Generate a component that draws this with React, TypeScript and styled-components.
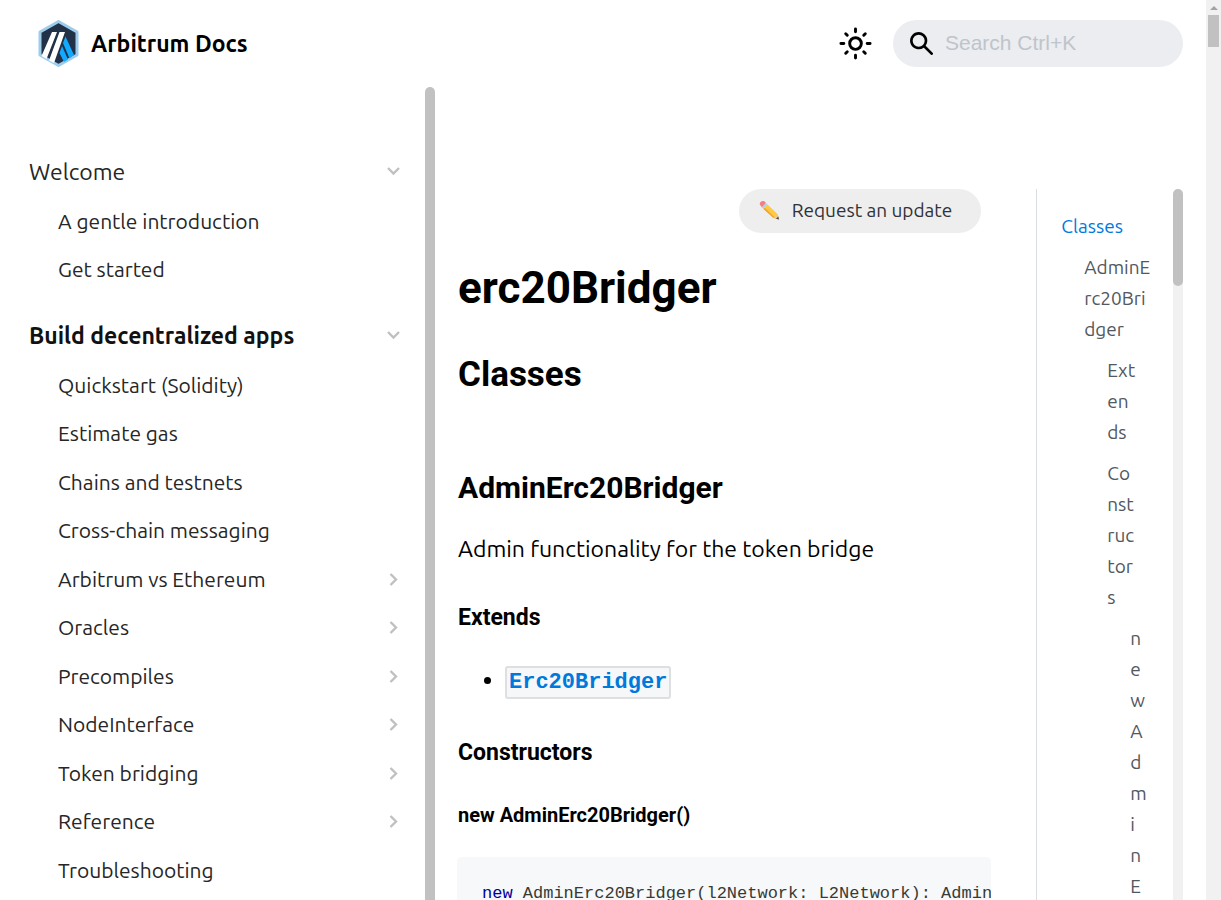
import React from 'react';
import styled, { createGlobalStyle, css } from 'styled-components';

const ui = 'Ubuntu, "Noto Sans", sans-serif';
const heading = 'Roboto, sans-serif';
const mono = '"Liberation Mono", monospace';

const Global = createGlobalStyle`
  *, *::before, *::after { box-sizing: border-box; }
  body { margin: 0; background: #fff; color: #000; font: 23px/36px ${ui}; overflow: hidden; }
  a { color: inherit; text-decoration: none; }
  ul { list-style: none; margin: 0; padding: 0; }
  code { font: inherit; }
  button { border: 0; background: none; padding: 0; color: inherit; cursor: pointer; font: inherit; }
`;

const Viewport = styled.div`
  display: flex;
  height: 100vh;
  overflow: hidden;
`;

const Page = styled.div`
  flex: 1;
  min-width: 0;
  display: flex;
  flex-direction: column;
`;

const PageScrollbar = styled.div`
  flex: none;
  width: 15px;
  padding: 6px 2px 0;
  background: #f1f1f1;
  display: flex;
  flex-direction: column;
  align-items: center;
  gap: 5px;
`;

const ScrollArrow = styled.span`
  border: 4px solid transparent;
  border-top: 0;
  border-bottom-color: #a3a3a3;
`;

const ScrollThumb = styled.span`
  width: 100%;
  height: 32px;
  background: #c1c1c1;
`;

const Navbar = styled.header`
  flex: none;
  display: flex;
  align-items: center;
  height: 87px;
  padding: 0 23px 0 38px;
`;

const Brand = styled.a`
  display: flex;
  align-items: center;
  gap: 12px;
  margin-right: auto;
  font-weight: 700;
`;

const ThemeButton = styled.button`
  display: grid;
  place-items: center;
  width: 46px;
  height: 46px;
  margin-right: 15px;
`;

const SearchBox = styled.label`
  display: flex;
  align-items: center;
  gap: 12px;
  width: 290px;
  height: 47px;
  padding: 0 17px;
  border-radius: 24px;
  background: #ebedf0;
`;

const SearchInput = styled.input`
  flex: 1;
  min-width: 0;
  padding: 0 0 2px;
  border: 0;
  outline: 0;
  background: none;
  font: 21px "Liberation Sans", sans-serif;
  &::placeholder { color: #bfc4cb; opacity: 1; }
`;

const Body = styled.div`
  flex: 1;
  min-height: 0;
  display: flex;
`;

const Sidebar = styled.aside`
  flex: none;
  display: flex;
  width: 435px;
  overflow: hidden;
`;

const Menu = styled.nav`
  flex: 1;
  padding: 61px 11px 0;
`;

const SidebarThumb = styled.span`
  width: 10px;
  border-radius: 5px 5px 0 0;
  background: #c1c1c1;
`;

const Group = styled.li`
  & + & { margin-top: 21px; }
`;

const rowBase = css`
  display: flex;
  align-items: center;
  justify-content: space-between;
  width: 100%;
  padding: 0 12px 0 18px;
  text-align: left;
`;

const GroupButton = styled.button<{ $active?: boolean }>`
  ${rowBase}
  height: 47px;
  font-weight: ${(p) => (p.$active ? 700 : 400)};
  color: ${(p) => (p.$active ? '#111' : '#262626')};
`;

const SubList = styled.ul`
  padding-left: 29px;
`;

const MenuItem = styled.li`
  display: flex;
  height: 44px;
  margin-top: 4px;
  &:nth-child(2n + 3) { margin-top: 5px; }
`;

const MenuLink = styled.a`
  ${rowBase}
  font-size: 21px;
  color: #262626;
`;

const Columns = styled.main`
  flex: 1;
  min-width: 0;
  display: grid;
  grid-template-columns: minmax(0, 3fr) minmax(0, 1fr);
  padding-top: 102px;
`;

const Article = styled.article`
  padding: 0 22px 0 23px;
  display: flex;
  flex-direction: column;
  min-width: 0;
`;

const UpdateLink = styled.a`
  align-self: flex-end;
  display: flex;
  align-items: center;
  gap: 12px;
  height: 44px;
  margin-right: 10px;
  padding: 0 29px 2px 20px;
  border-radius: 22px;
  background: #eee;
  color: #303236;
  font-size: 19px;
`;

const Title = styled.h1`
  margin: 28px 0 0;
  font: 700 44px/54px ${heading};
`;

const Section = styled.h2`
  margin: 38px 0 0;
  font: 700 35px/44px ${heading};
`;

const ClassName = styled.h3`
  margin: 72px 0 0;
  font: 700 30px/38px ${heading};
`;

const Text = styled.p`
  margin: 24px 0 0;
`;

const Subhead = styled.h4`
  margin: 37px 0 0;
  font: 700 23px/28px ${heading};
`;

const Signature = styled.h5`
  margin: 35px 0 0;
  font: 700 20px/26px ${heading};
`;

const Bullets = styled.ul`
  margin: 30px 0 4px;
  padding-left: 47px;
  list-style: disc;
`;

const CodeLink = styled.a`
  padding: 2px;
  border: 2px solid #dddfe0;
  border-radius: 3px;
  background: #f6f7f8;
  color: #0079dc;
  font: 700 22px ${mono};
`;

const CodeBlock = styled.pre`
  margin: 29px 0 0 -1px;
  padding: 24px 0 30px 25px;
  border-radius: 5px;
  background: #f6f8fa;
  overflow: hidden;
  color: #393a34;
  font: 17px/26px ${mono};
`;

const Keyword = styled.span`
  color: #00009f;
`;

const TocColumn = styled.aside`
  display: flex;
  margin: 0 23px;
  border-left: 1px solid #dadde1;
  overflow: hidden;
`;

const TocNav = styled.nav`
  flex: 1;
  min-width: 0;
  padding: 22px 8px 0 24px;
  color: #525860;
  font-size: 19px;
  line-height: 31px;
  overflow-wrap: anywhere;
`;

const TocList = styled.ul<{ $nested?: boolean }>`
  padding: ${(p) => (p.$nested ? '0 13px 0 23px' : '0')};
`;

const TocItem = styled.li`
  ${TocList} & { margin-top: 10px; }
  ${TocNav} > ul > & { margin-top: 0; }
`;

const TocLink = styled.a<{ $active?: boolean }>`
  display: block;
  color: ${(p) => (p.$active ? '#0079dc' : 'inherit')};
`;

const TocTrack = styled.div`
  width: 10px;
  background: #f1f1f1;
  border-radius: 5px 5px 0 0;
`;

const TocThumb = styled.span`
  display: block;
  height: 97px;
  border-radius: 5px;
  background: #c1c1c1;
`;

const Logo = () => (
  <svg width="41" height="47" viewBox="0 0 41 47" aria-hidden="true">
    <path d="M20.5 1.5 39 12v23L20.5 45.5 2 35V12z" fill="#213147" stroke="#9dcced" strokeWidth="3" strokeLinejoin="round" />
    <path d="M27.5 16.5 36 35 31.5 38.5 25 23z" fill="#12aaff" />
    <path d="M24 26 30 39.5 26 42 21.5 33z" fill="#12aaff" />
    <path d="M14 12h5L8.5 39l-5-3zM21.5 12h5.5L16 43l-5-2.5z" fill="#fff" />
  </svg>
);

const Sun = () => (
  <svg width="35" height="35" viewBox="0 0 24 24" fill="none" stroke="currentColor" strokeWidth="2" strokeLinecap="round" aria-hidden="true">
    <circle cx="12" cy="12" r="4" />
    <path d="M2 12h2M20 12h2M12 2v2M12 20v2M5.29 5.29l1.06 1.06M17.65 17.65l1.06 1.06M5.29 18.71l1.06-1.06M17.65 6.35l1.06-1.06" />
  </svg>
);

const Magnifier = () => (
  <svg width="23" height="23" viewBox="0 0 16 16" aria-hidden="true">
    <path d="M6.02945,10.20327a4.17382,4.17382,0,1,1,4.17382-4.17382A4.15609,4.15609,0,0,1,6.02945,10.20327Zm9.69195,4.2199L10.8989,9.59979A5.88021,5.88021,0,0,0,12.058,6.02856,6.00467,6.00467,0,1,0,9.59979,10.8989l4.82338,4.82338a.89729.89729,0,0,0,1.29912,0,.89749.89749,0,0,0-.00087-1.29909Z" />
  </svg>
);

const Chevron = ({ down }: { down?: boolean }) => (
  <svg width="16" height="16" viewBox="0 0 16 16" fill="none" stroke="#c0c0c0" strokeWidth="2.4" aria-hidden="true">
    <path d={down ? 'M2 4l5.5 5.5 5.5-5.500' : 'M4.500 3l5.500 5.500-5.500 5.500'} />
  </svg>
);

const Pencil = () => (
  <svg width="21" height="21" viewBox="0 0 21 21" aria-hidden="true">
    <path d="M1.5 5.5Q0 3.5 1.5 2T5 1l2 2-4 4.5z" fill="#f37f86" />
    <path d="m3 7.5 4-4.5 1.5 1.5-4 4.5z" fill="#a9d5e4" />
    <path d="m4.5 9 4-4.5L18.5 14 20 19.5 14.5 18z" fill="#ffca43" />
    <path d="m4.5 9 1.3-1.3 10 9.8-1.3.5z" fill="#f2a32c" />
    <path d="m14.5 18 4-4L20 19.5z" fill="#e8c79b" />
    <path d="m17 18.7 2.3-2.2.7 3z" fill="#4a4a4a" />
  </svg>
);

type Entry = { label: string; nested?: boolean };
type MenuGroup = { label: string; active?: boolean; items: Entry[] };

const menu: MenuGroup[] = [
  { label: 'Welcome', items: [{ label: 'A gentle introduction' }, { label: 'Get started' }] },
  {
    label: 'Build decentralized apps',
    active: true,
    items: [
      { label: 'Quickstart (Solidity)' },
      { label: 'Estimate gas' },
      { label: 'Chains and testnets' },
      { label: 'Cross-chain messaging' },
      { label: 'Arbitrum vs Ethereum', nested: true },
      { label: 'Oracles', nested: true },
      { label: 'Precompiles', nested: true },
      { label: 'NodeInterface', nested: true },
      { label: 'Token bridging', nested: true },
      { label: 'Reference', nested: true },
      { label: 'Troubleshooting' },
    ],
  },
];

export default function App() {
  return (
    <Viewport>
      <Global />
      <Page>
        <Navbar>
          <Brand href="#"><Logo />Arbitrum Docs</Brand>
          <ThemeButton type="button" aria-label="Switch theme"><Sun /></ThemeButton>
          <SearchBox>
            <Magnifier />
            <SearchInput type="search" aria-label="Search" placeholder="Search Ctrl+K" />
          </SearchBox>
        </Navbar>
        <Body>
          <Sidebar>
            <Menu aria-label="Docs">
              <ul>
                {menu.map((group) => (
                  <Group key={group.label}>
                    <GroupButton type="button" $active={group.active} aria-expanded="true">
                      {group.label}
                      <Chevron down />
                    </GroupButton>
                    <SubList>
                      {group.items.map((item) => (
                        <MenuItem key={item.label}>
                          <MenuLink href="#">
                            {item.label}
                            {item.nested && <Chevron />}
                          </MenuLink>
                        </MenuItem>
                      ))}
                    </SubList>
                  </Group>
                ))}
              </ul>
            </Menu>
            <SidebarThumb />
          </Sidebar>
          <Columns>
            <Article>
              <UpdateLink href="#"><Pencil />Request an update</UpdateLink>
              <Title>erc20Bridger</Title>
              <Section>Classes</Section>
              <ClassName>AdminErc20Bridger</ClassName>
              <Text>Admin functionality for the token bridge</Text>
              <Subhead>Extends</Subhead>
              <Bullets>
                <li><CodeLink href="#">Erc20Bridger</CodeLink></li>
              </Bullets>
              <Subhead>Constructors</Subhead>
              <Signature>new AdminErc20Bridger()</Signature>
              <CodeBlock><code><Keyword>new</Keyword> AdminErc20Bridger(l2Network: L2Network): AdminErc20Bridger;</code></CodeBlock>
            </Article>
            <TocColumn>
              <TocNav aria-label="On this page">
                <TocList>
                  <TocItem>
                    <TocLink href="#" $active>Classes</TocLink>
                    <TocList $nested>
                      <TocItem>
                        <TocLink href="#">AdminErc20Bridger</TocLink>
                        <TocList $nested>
                          <TocItem><TocLink href="#">Extends</TocLink></TocItem>
                          <TocItem>
                            <TocLink href="#">Constructors</TocLink>
                            <TocList $nested>
                              <TocItem><TocLink href="#">new AdminErc20Bridger()</TocLink></TocItem>
                            </TocList>
                          </TocItem>
                        </TocList>
                      </TocItem>
                    </TocList>
                  </TocItem>
                </TocList>
              </TocNav>
              <TocTrack><TocThumb /></TocTrack>
            </TocColumn>
          </Columns>
        </Body>
      </Page>
      <PageScrollbar aria-hidden="true"><ScrollArrow /><ScrollThumb /></PageScrollbar>
    </Viewport>
  );
}
